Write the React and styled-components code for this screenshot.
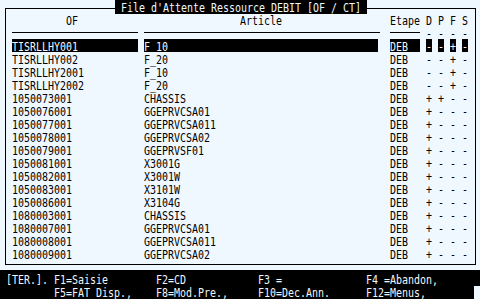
import React from 'react';
import styled, { createGlobalStyle } from 'styled-components';

const PAPER = '#f0f8ff';
const INK = '#000000';

const GlobalStyle = createGlobalStyle`
  html, body {
    margin: 0;
    padding: 0;
    background: ${PAPER};
    overflow: hidden;
  }
  #root {
    width: 480px;
    height: 299px;
  }
`;

const Screen = styled.div`
  width: 480px;
  height: 299px;
  display: flex;
  flex-direction: column;
  font-family: "DejaVu Sans Mono", "Liberation Mono", monospace;
  font-size: 13px;
  color: ${INK};
`;

// one character cell is 6x13, the font is squeezed to fit
const Txt = styled.span`
  display: inline-block;
  white-space: pre;
  line-height: 13px;
  height: 13px;
  transform: scaleX(0.767);
  transform-origin: 0 0;
`;

const Frame = styled.div`
  box-sizing: border-box;
  margin: 8px 0 0 5px;
  width: 471px;
  height: 257px;
  border: 1px solid ${INK};
  display: flex;
  flex-direction: column;
`;

const TitleBar = styled.div`
  display: flex;
  justify-content: center;
  margin-top: -9px;
  height: 13px;
`;

const Title = styled.div`
  box-sizing: border-box;
  width: 252px;
  height: 14px;
  padding-left: 6px;
  background: ${INK};
  color: ${PAPER};
  overflow: hidden;
`;

const Row = styled.div`
  display: grid;
  grid-template-columns: 126px 240px 30px repeat(4, 6px);
  column-gap: 6px;
  height: 13px;
  padding-left: 6px;
`;

const Cell = styled.div`
  height: 13px;
  width: ${(p) => p.$w || 'auto'};
  padding-left: ${(p) => p.$pad || 0}px;
  background: ${(p) => (p.$on ? INK : 'transparent')};
  color: ${(p) => (p.$on ? PAPER : INK)};
`;

const Rule = styled.div`
  height: 13px;
  width: ${(p) => p.$w || 'auto'};
  display: flex;
  align-items: center;
  &::before {
    content: '';
    display: block;
    width: 100%;
    height: 1px;
    background: ${INK};
  }
`;

const Footer = styled.div`
  margin-top: 5px;
  flex: 1;
  background: ${INK};
  color: ${PAPER};
  padding-top: 3px;
`;

const KeyLine = styled.div`
  display: grid;
  grid-template-columns: 48px 102px 102px 108px 108px 6px;
  height: 13px;
  padding-left: 6px;
`;

const Cursor = styled.div`
  height: 13px;
  background: ${PAPER};
`;

const rows = [
  ['TISRLLHY001', 'F_10', '-', '-', '+', '-'],
  ['TISRLLHY002', 'F_20', '-', '-', '+', '-'],
  ['TISRLLHY2001', 'F_10', '-', '-', '+', '-'],
  ['TISRLLHY2002', 'F_20', '-', '-', '+', '-'],
  ['1050073001', 'CHASSIS', '+', '+', '-', '-'],
  ['1050076001', 'GGEPRVCSA01', '+', '-', '-', '-'],
  ['1050077001', 'GGEPRVCSA011', '+', '-', '-', '-'],
  ['1050078001', 'GGEPRVCSA02', '+', '-', '-', '-'],
  ['1050079001', 'GGEPRVSF01', '+', '-', '-', '-'],
  ['1050081001', 'X3001G', '+', '-', '-', '-'],
  ['1050082001', 'X3001W', '+', '-', '-', '-'],
  ['1050083001', 'X3101W', '+', '-', '-', '-'],
  ['1050086001', 'X3104G', '+', '-', '-', '-'],
  ['1080003001', 'CHASSIS', '+', '-', '-', '-'],
  ['1080007001', 'GGEPRVCSA01', '+', '-', '-', '-'],
  ['1080008001', 'GGEPRVCSA011', '+', '-', '-', '-'],
  ['1080009001', 'GGEPRVCSA02', '+', '-', '-', '-'],
];

export default function App() {
  return (
    <>
      <GlobalStyle />
      <Screen>
        <Frame>
          <TitleBar>
            <Title><Txt>File d'Attente Ressource DEBIT [OF / CT]</Txt></Title>
          </TitleBar>
          <Row>
            <Cell $pad={54}><Txt>OF</Txt></Cell>
            <Cell $pad={96}><Txt>Article</Txt></Cell>
            <Cell><Txt>Etape</Txt></Cell>
            <Cell><Txt>D</Txt></Cell>
            <Cell><Txt>P</Txt></Cell>
            <Cell><Txt>F</Txt></Cell>
            <Cell><Txt>S</Txt></Cell>
          </Row>
          <Row>
            <Rule />
            <Rule $w="236px" />
            <Rule />
            <Cell><Txt>-</Txt></Cell>
            <Cell><Txt>-</Txt></Cell>
            <Cell><Txt>-</Txt></Cell>
            <Cell><Txt>-</Txt></Cell>
          </Row>
          {rows.map(([of, art, ...flags], i) => (
            <Row key={of}>
              <Cell $on={i === 0}><Txt>{of}</Txt></Cell>
              <Cell $on={i === 0} $w="234px"><Txt>{art}</Txt></Cell>
              <Cell $on={i === 0}><Txt>DEB</Txt></Cell>
              {flags.map((f, j) => (
                <Cell key={j} $on={i === 0}><Txt>{f}</Txt></Cell>
              ))}
            </Row>
          ))}
        </Frame>
        <Footer>
          <KeyLine>
            <Txt>[TER.].</Txt>
            <Txt>F1=Saisie</Txt>
            <Txt>F2=CD</Txt>
            <Txt>F3 =</Txt>
            <Txt>F4 =Abandon,</Txt>
          </KeyLine>
          <KeyLine>
            <span />
            <Txt>F5=FAT Disp.,</Txt>
            <Txt>F8=Mod.Pre.,</Txt>
            <Txt>F10=Dec.Ann.</Txt>
            <Txt>F12=Menus,</Txt>
            <Cursor />
          </KeyLine>
        </Footer>
      </Screen>
    </>
  );
}
